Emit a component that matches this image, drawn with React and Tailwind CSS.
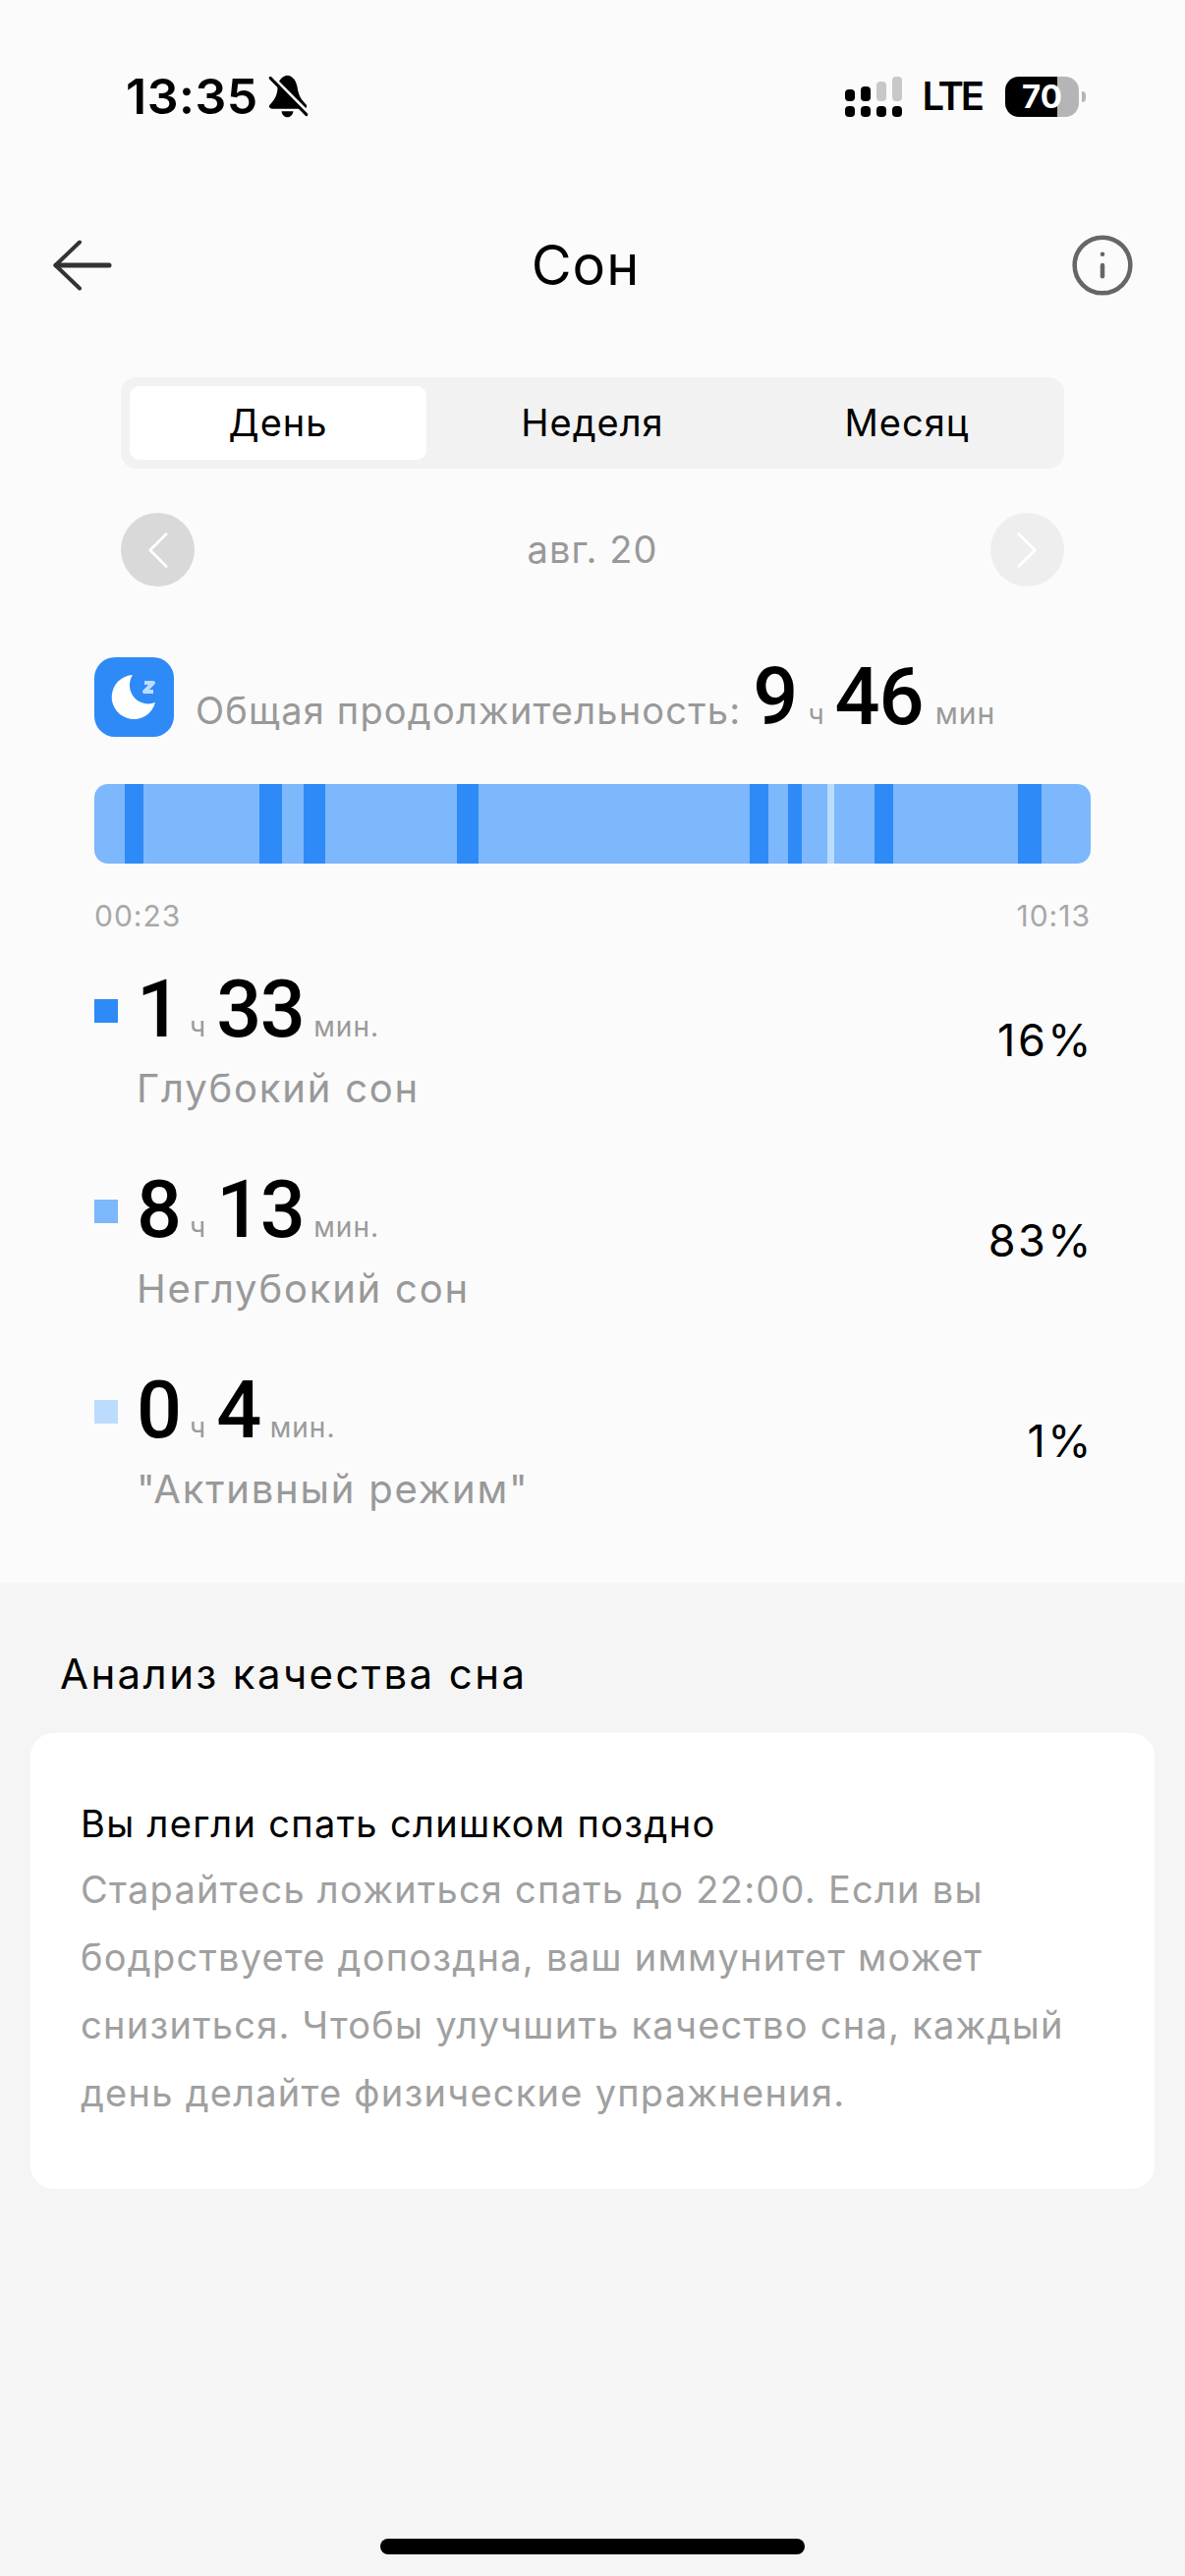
/**
 * Sleep screen
 * Daily sleep stats with stage bar and quality analysis
 */

import { ChevronLeft, ChevronRight, Info } from 'lucide-react';

// widths in px along the bar, kind picks the colour
const SEGMENTS = [
  { w: 31, kind: 'light' },
  { w: 19, kind: 'deep' },
  { w: 118, kind: 'light' },
  { w: 23, kind: 'deep' },
  { w: 22, kind: 'light' },
  { w: 22, kind: 'deep' },
  { w: 134, kind: 'light' },
  { w: 22, kind: 'deep' },
  { w: 276, kind: 'light' },
  { w: 19, kind: 'deep' },
  { w: 20, kind: 'light' },
  { w: 14, kind: 'deep' },
  { w: 26, kind: 'light' },
  { w: 7, kind: 'active' },
  { w: 41, kind: 'light' },
  { w: 19, kind: 'deep' },
  { w: 127, kind: 'light' },
  { w: 24, kind: 'deep' },
  { w: 50, kind: 'light' },
];

const SEGMENT_COLORS = {
  deep: 'bg-[#2e8af6]',
  light: 'bg-[#7db7fc]',
  active: 'bg-[#bcdcfd]',
};

const STAGES = [
  { h: '1', m: '33', unit: 'мин.', label: 'Глубокий сон', pct: '16%', color: 'bg-[#2e8af6]' },
  { h: '8', m: '13', unit: 'мин.', label: 'Неглубокий сон', pct: '83%', color: 'bg-[#7db7fc]' },
  { h: '0', m: '4', unit: 'мин.', label: '"Активный режим"', pct: '1%', color: 'bg-[#bcdcfd]' },
];

function BellSlash() {
  return (
    <svg width="41" height="44" viewBox="520 48 122 132" className="ml-[10px]">
      <path d="M578 50C590 50 604 62 608 85C612 112 620 125 636 140Q640 150 630 152L530 152Q518 150 524 140C540 125 548 108 548 88C548 65 565 50 578 50Z" fill="#000" />
      <path d="M560 160L596 160C594 172 586 178 578 178C570 178 562 172 560 160Z" fill="#000" />
      <path d="M522 46L640 164" stroke="#fbfbfb" strokeWidth="12" />
      <path d="M526 58L636 170" stroke="#000" strokeWidth="9" strokeLinecap="round" />
    </svg>
  );
}

function SignalBars() {
  return (
    <svg width="58" height="41" viewBox="0 0 58 41">
      <rect x="0" y="13" width="10" height="12" rx="4" fill="#000" />
      <rect x="16" y="10" width="10" height="15" rx="4" fill="#000" />
      <rect x="32" y="5" width="10" height="20" rx="4" fill="#c8c8c8" />
      <rect x="48" y="0" width="10" height="25" rx="4" fill="#c8c8c8" />
      <rect x="0" y="30" width="10" height="11" rx="4" fill="#000" />
      <rect x="16" y="30" width="10" height="11" rx="4" fill="#000" />
      <rect x="32" y="30" width="10" height="11" rx="4" fill="#000" />
      <rect x="48" y="30" width="10" height="11" rx="4" fill="#000" />
    </svg>
  );
}

function Battery() {
  return (
    <div className="flex items-center">
      <div className="flex h-[41px] w-[75px] items-center justify-center rounded-[14px] bg-[linear-gradient(to_right,#000_71%,#b5b5b5_71%)] text-[33px] leading-none font-bold text-white">
        70
      </div>
      <div className="ml-[3px] h-[11px] w-[4px] rounded-r-full bg-[#b5b5b5]" />
    </div>
  );
}

function BackArrow() {
  return (
    <svg width="60" height="52" viewBox="0 0 60 52" fill="none" stroke="#333" strokeWidth="5" strokeLinecap="round" strokeLinejoin="round">
      <path d="M57 26H3" />
      <path d="M27 2.5L2.5 26L27 49.5" strokeWidth="4" />
    </svg>
  );
}

function MoonIcon() {
  return (
    <div className="h-[81px] w-[81px] shrink-0 rounded-[21px] bg-[#2e8af6]">
      <svg width="81" height="81" viewBox="0 0 81 81">
        <path d="M39 18A22.5 22.5 0 1 0 62 46A19 19 0 0 1 39 18Z" fill="#fff" />
        <path d="M51 26H60L51 35H60" fill="none" stroke="#bcdcfd" strokeWidth="4" strokeLinejoin="round" />
      </svg>
    </div>
  );
}

function StageRow({ stage }) {
  return (
    <div className="flex h-[204px] items-start">
      <div className={`mt-[24px] h-[24px] w-[24px] shrink-0 ${stage.color}`} />
      <div className="ml-[19px] flex-1">
        <div className="flex h-[70px] items-baseline text-black">
          <span className="w-[46px] text-[81px] leading-[70px] font-medium [font-family:Roboto,sans-serif]">{stage.h}</span>
          <span className="ml-[8px] text-[28px] text-[#9a9a9a]">ч</span>
          <span className="ml-[11px] text-[81px] leading-[70px] font-medium tracking-[-1.5px] [font-family:Roboto,sans-serif]">{stage.m}</span>
          <span className="ml-[10px] text-[28px] tracking-[1px] text-[#9a9a9a]">{stage.unit}</span>
        </div>
        <div className="mt-[23px] text-[40px] leading-[44px] tracking-[1.8px] text-[#999]">{stage.label}</div>
      </div>
      <div className="-mr-[3px] mt-[41px] text-[45px] leading-[50px] tracking-[2.5px] text-black">{stage.pct}</div>
    </div>
  );
}

export default function App() {
  return (
    <div className="flex min-h-[2622px] w-[1206px] flex-col bg-[#f5f5f5] [font-family:Inter,sans-serif]">
      <div className="bg-[#fbfbfb] px-[96px] pb-[6px]">
        {/* Status bar */}
        <div className="-mx-[96px] mt-[77px] flex h-[42px] items-center justify-between pr-[101px] pl-[128px]">
          <div className="flex items-center">
            <span className="text-[50px] leading-none font-semibold tracking-[0.5px] text-black">13:35</span>
            <BellSlash />
          </div>
          <div className="flex items-center">
            <SignalBars />
            <span className="ml-[20px] text-[40px] leading-none font-semibold tracking-[-3px] text-black">LTE</span>
            <div className="ml-[24px]">
              <Battery />
            </div>
          </div>
        </div>

        {/* Nav */}
        <div className="-mx-[96px] mt-[121px] flex h-[60px] items-center justify-between pr-[50px] pl-[54px]">
          <BackArrow />
          <span className="mr-[10px] text-[56px] leading-none tracking-[1px] text-black">Сон</span>
          <Info className="h-[68px] w-[68px] text-[#666]" strokeWidth={1.6} />
        </div>

        {/* Period tabs */}
        <div className="mx-[27px] mt-[84px] grid h-[93px] grid-cols-3 rounded-[16px] bg-[#f2f2f2] text-[38px] tracking-[1px] text-black">
          <div className="m-[9px] flex items-center justify-center rounded-[10px] bg-white">День</div>
          <div className="flex items-center justify-center">Неделя</div>
          <div className="flex items-center justify-center">Месяц</div>
        </div>

        {/* Date switcher */}
        <div className="mx-[27px] mt-[45px] flex h-[75px] items-center justify-between">
          <div className="flex h-[75px] w-[75px] items-center justify-center rounded-full bg-[#d9d9d9]">
            <ChevronLeft className="h-[66px] w-[66px] text-white" strokeWidth={1} />
          </div>
          <span className="text-[38px] tracking-[1px] text-[#999]">авг. 20</span>
          <div className="flex h-[75px] w-[75px] items-center justify-center rounded-full bg-[#eeeeee]">
            <ChevronRight className="h-[66px] w-[66px] text-white" strokeWidth={1} />
          </div>
        </div>

        {/* Total */}
        <div className="mt-[72px] flex h-[81px] items-end">
          <MoonIcon />
          <div className="-mb-[2px] ml-[22px] flex items-baseline">
            <span className="text-[38px] tracking-[1.2px] text-[#999]">Общая продолжительность:</span>
            <span className="ml-[12px] text-[81px] leading-[80px] font-medium text-black [font-family:Roboto,sans-serif]">9</span>
            <span className="ml-[10px] text-[28px] text-[#9a9a9a]">ч</span>
            <span className="ml-[11px] text-[81px] leading-[80px] font-medium tracking-[-1px] text-black [font-family:Roboto,sans-serif]">46</span>
            <span className="ml-[12px] text-[30px] tracking-[1px] text-[#9a9a9a]">мин</span>
          </div>
        </div>

        {/* Stage bar */}
        <div className="mt-[48px] flex h-[81px] overflow-hidden rounded-[14px]">
          {SEGMENTS.map((seg, i) => (
            <div key={i} className={SEGMENT_COLORS[seg.kind]} style={{ width: seg.w }} />
          ))}
        </div>
        <div className="mt-[35px] flex justify-between text-[30px] leading-[36px] tracking-[1px] text-[#a8a8a8]">
          <span>00:23</span>
          <span>10:13</span>
        </div>

        {/* Stages */}
        <div className="mt-[43px]">
          {STAGES.map((stage) => (
            <StageRow key={stage.label} stage={stage} />
          ))}
        </div>
      </div>

      {/* Quality analysis */}
      <div className="px-[31px]">
        <h2 className="mt-[69px] pl-[30px] text-[42px] leading-[48px] font-normal tracking-[2.4px] text-black">Анализ качества сна</h2>
        <div className="mt-[36px] h-[464px] rounded-[24px] bg-white px-[51px] pt-[70px]">
          <div className="text-[38px] leading-[44px] tracking-[1.35px] text-black">Вы легли спать слишком поздно</div>
          <p className="mt-[11px] text-[38px] leading-[69px] tracking-[1.25px] text-[#a0a0a0]">
            Старайтесь ложиться спать до 22:00. Если вы бодрствуете допоздна, ваш иммунитет может снизиться. Чтобы улучшить качество сна, каждый день делайте физические упражнения.
          </p>
        </div>
      </div>

      {/* Home indicator */}
      <div className="mt-auto mb-[22px] flex justify-center">
        <div className="h-[16px] w-[432px] rounded-full bg-black" />
      </div>
    </div>
  );
}
